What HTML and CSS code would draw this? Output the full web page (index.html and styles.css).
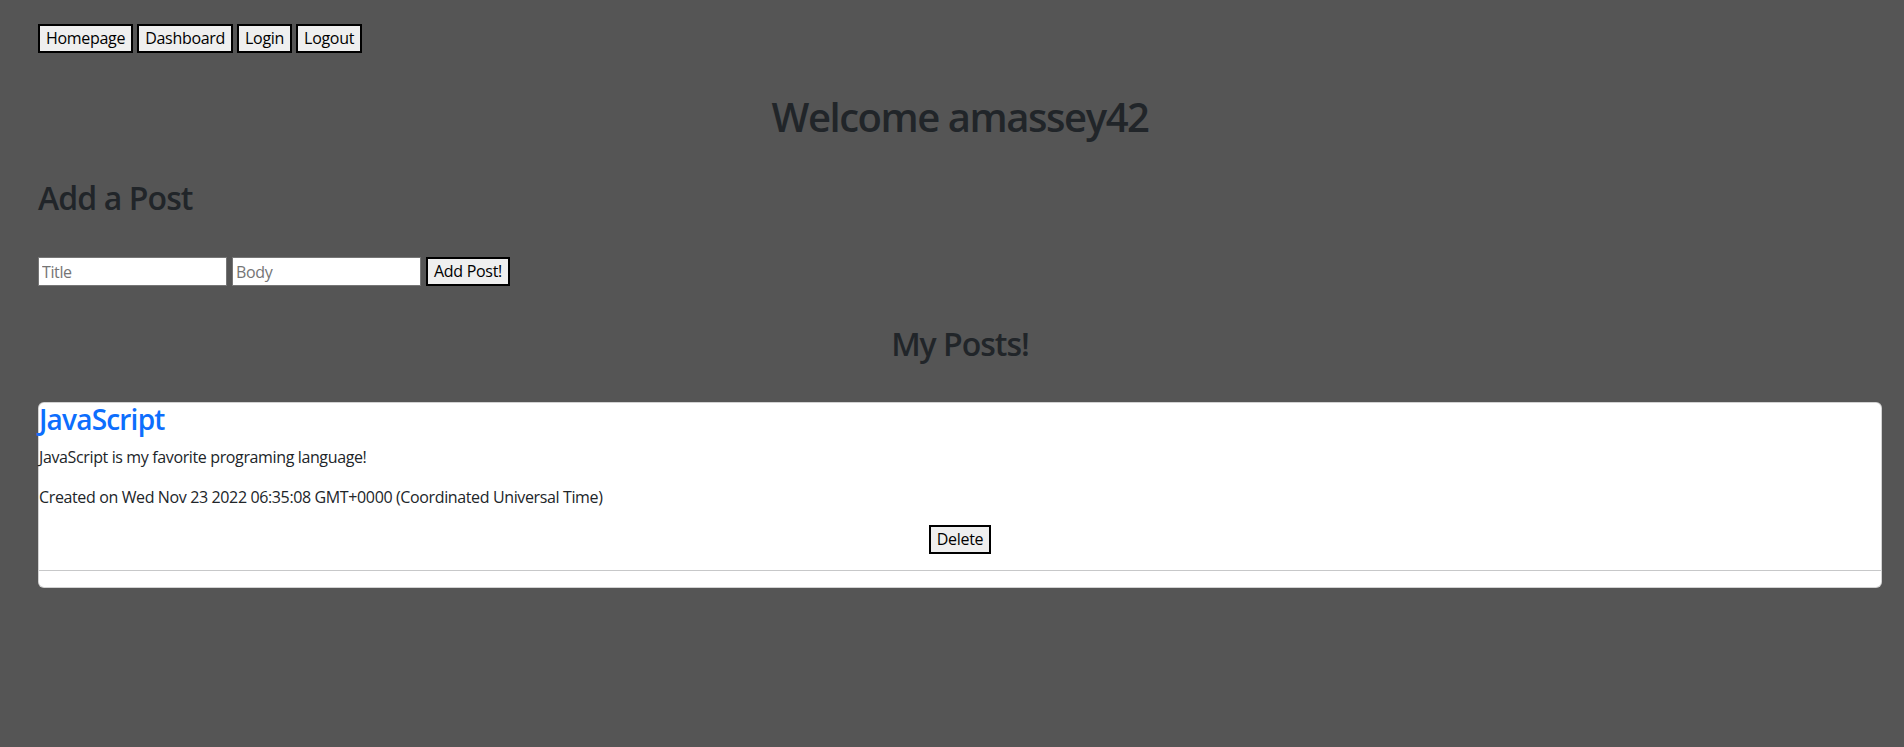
FILE: index.html
```html
<!DOCTYPE html>
<html lang="en">
<head>
<meta charset="utf-8">
<title>Dashboard</title>
<link rel="stylesheet" href="styles.css">
</head>
<body>
  <nav class="nav">
    <button class="btn">Homepage</button>
    <button class="btn">Dashboard</button>
    <button class="btn">Login</button>
    <button class="btn">Logout</button>
  </nav>

  <h1 class="welcome">Welcome amassey42</h1>

  <h2 class="add-title">Add a Post</h2>
  <form class="post-form">
    <input class="field" type="text" placeholder="Title">
    <input class="field" type="text" placeholder="Body">
    <button class="btn" type="button">Add Post!</button>
  </form>

  <h2 class="posts-title">My Posts!</h2>

  <div class="card">
    <h3 class="card-title">JavaScript</h3>
    <p class="card-text">JavaScript is my favorite programing language!</p>
    <p class="card-text">Created on Wed Nov 23 2022 06:35:08 GMT+0000 (Coordinated Universal Time)</p>
    <div class="card-actions">
      <button class="btn">Delete</button>
    </div>
    <hr class="card-rule">
  </div>
</body>
</html>
```

FILE: styles.css
```css
*, *::before, *::after {
  box-sizing: border-box;
}

html, body {
  height: 100%;
}

body {
  margin: 0;
  padding: 24px 22px 0 38px;
  background: #555555;
  color: #212529;
  font-family: "Open Sans", "Noto Sans", sans-serif;
  font-size: 16px;
  line-height: 1.5;
  letter-spacing: -0.37px;
}

.nav {
  display: flex;
  gap: 4px;
}

.btn {
  font-family: inherit;
  font-size: 16px;
  letter-spacing: -0.3px;
  line-height: 23.4px;
  padding: 1px 6px;
  border: 2px solid #000;
  background: #efefef;
  color: #000;
  border-radius: 0;
  margin: 0;
}

.welcome {
  margin: 40px 0 0;
  font-size: 40px;
  font-weight: 600;
  line-height: 1.2;
  letter-spacing: -1.45px;
  text-align: center;
}

.add-title {
  margin: 38px 0 0;
  font-size: 32px;
  font-weight: 600;
  line-height: 1.2;
  letter-spacing: -0.9px;
}

.post-form {
  display: flex;
  gap: 5.5px;
  margin-top: 39px;
}

.field {
  width: 188.5px;
  height: 29.5px;
  padding: 1px 3px;
  border: 1px solid #767676;
  background: #fff;
  font-family: inherit;
  font-size: 16px;
  letter-spacing: -0.37px;
  line-height: 24px;
  color: #212529;
  margin: 0;
}

.field::placeholder {
  color: #757575;
}

.posts-title {
  margin: 38.5px 0 0;
  font-size: 32px;
  font-weight: 600;
  line-height: 1.2;
  letter-spacing: -1px;
  text-align: center;
}

.card {
  margin-top: 39px;
  background: #fff;
  border: 1px solid rgba(0, 0, 0, 0.175);
  border-radius: 6px;
}

.card-title {
  margin: 0 0 8px;
  font-size: 28px;
  font-weight: 600;
  line-height: 1.2;
  letter-spacing: -0.8px;
  color: #0d6efd;
}

.card-text {
  margin: 0 0 16px;
}

.card-actions {
  display: flex;
  justify-content: center;
}

.card-rule {
  margin: 16px 0;
  border: 0;
  border-top: 1px solid #212529;
  opacity: 0.25;
}
```
